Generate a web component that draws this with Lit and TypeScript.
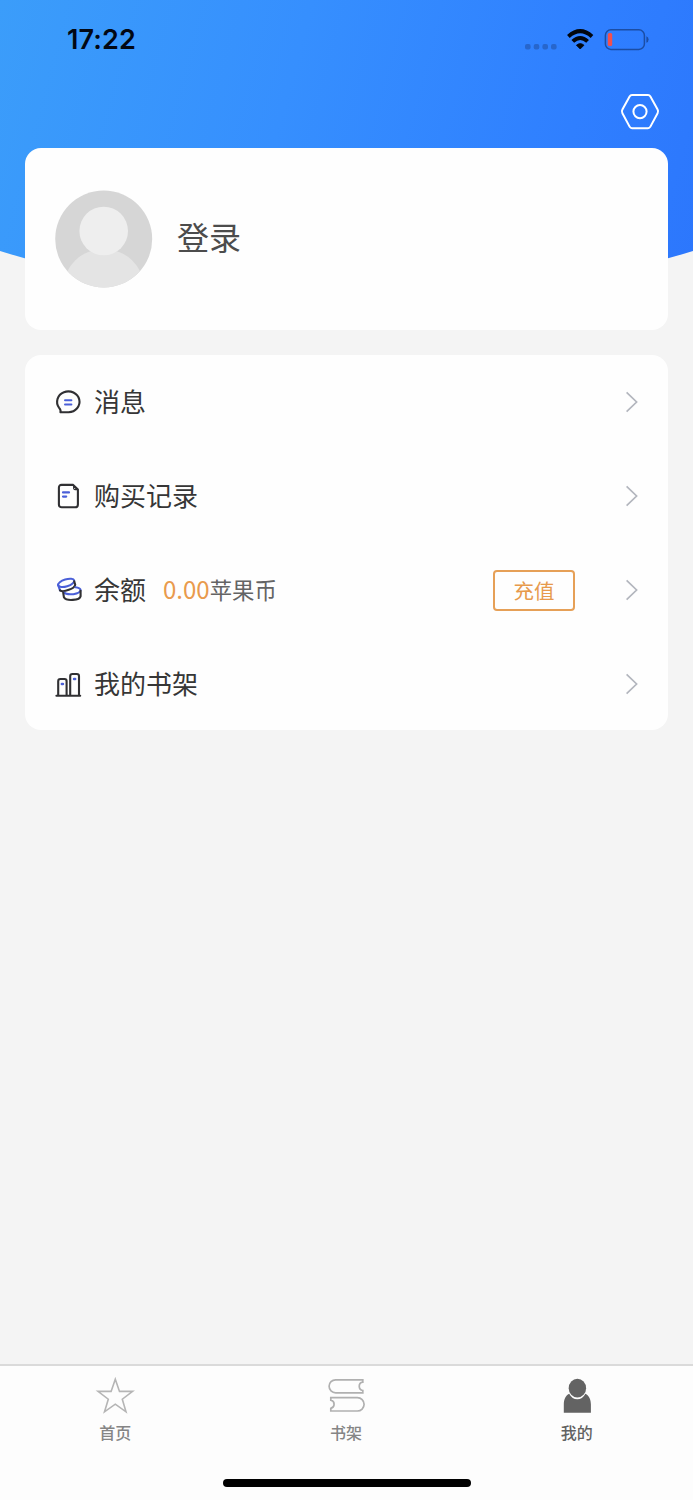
import { LitElement, html, css, svg } from "lit";
import { customElement, property } from "lit/decorators.js";

const icons: Record<string, unknown> = {
  message: svg`
    <path d="M6.4 24.2H14.6A11.2 10.4 0 1 0 5 19.6Q7.2 22.2 6.4 24.2Z" stroke="#303033" />
    <path d="M11 12.3H17.4M11 16.4H17.4" stroke="#4a5fd8" stroke-width="2" />`,
  record: svg`
    <path d="M7.6 2.9H19.2L23.9 7.4V22.4Q23.9 25.3 21 25.3H7.8Q4.9 25.3 4.9 22.4V5.8Q4.9 2.9 7.6 2.9Z" stroke="#303033" />
    <path d="M19.6 3.6V6.4Q19.8 7.6 21 7.6H23Z" stroke="#303033" stroke-width="1.1" />
    <path d="M9 10.4H15M9 14.6H12.2" stroke="#4a5fd8" stroke-width="2.2" />`,
  balance: svg`
    <path d="M4.2 9.2L6 14.4" stroke="#4a5fd8" />
    <ellipse cx="12.2" cy="6.9" rx="8.4" ry="3.5" transform="rotate(-17 12.2 6.9)" stroke="#4a5fd8" />
    <path d="M20.2 5.2L21.2 8.8Q20.8 11.6 14.8 13.8Q8.6 16.2 6 14.4" stroke="#303033" />
    <path d="M21.4 11.2Q26.2 11.6 26.6 14.2Q26.2 17.2 19.4 18.2Q12 18.8 9.8 16.6" stroke="#4a5fd8" />
    <path d="M9.2 16.6L9.9 21.2Q11.8 24.4 18.8 23.9Q26 23.4 26.6 20.2V14.8" stroke="#303033" />`,
  shelf: svg`
    <path d="M2.4 25.8H26.2M4.2 25.4V11.2Q4.2 9 6.4 9H10.6Q12.6 9 12.6 11.2V25.4M16.2 25.4V6.2Q16.2 4 18.4 4H22.8Q25 4 25 6.2V25.4" stroke="#303033" />
    <path d="M7.9 14H8.9M20.1 9H21.1" stroke="#4a5fd8" stroke-width="2.6" />`,
};

const tabIcons: Record<string, unknown> = {
  home: svg`<path d="M20.3 4.2L24.5 16.4H37.6L27.3 24.2L31 36.8L20.3 29.2L9.5 36.8L13.3 24.2L3 16.4H16.1Z" fill="none" stroke="#b5b5b5" stroke-width="1.6" />`,
  books: svg`<path d="M36.8 4.8H9.6A6.5 6.5 0 0 0 9.6 17.8H36.8V15.5A4.2 4.2 0 0 1 36.8 7.2ZM4.8 22.6H31.4A6.7 6.7 0 0 1 31.4 36H4.8V33.4A4.2 4.2 0 0 0 4.8 25.2Z" fill="none" stroke="#b0b0b0" stroke-width="1.7" />`,
  mine: svg`<g transform="translate(.4 0)"><path d="M11.8 18.7C8 20.7 6.4 24.4 6.4 29.5V37.8H33.5V29.5C33.5 24.4 31.8 20.7 28 18.7Q25 24.3 19.9 24.3T11.8 18.7Z" fill="#636363" />
    <ellipse cx="20" cy="13.2" rx="8.7" ry="9.4" fill="#636363" /></g>`,
};

@customElement("menu-row")
class MenuRow extends LitElement {
  @property() icon = "";
  @property() label = "";

  static styles = css`
    :host { display: flex; align-items: center; height: 94px; padding: 0 29px; }
    .icon { width: 28px; height: 28px; flex: none; fill: none; stroke-width: 2.1; stroke-linecap: round; stroke-linejoin: round; }
    .label { margin: -2px 0 0 12px; font-size: 26px; line-height: 38px; color: #363636; white-space: nowrap; }
    .extra { flex: 1; display: flex; align-items: center; }
    .arrow { width: 16px; height: 24px; flex: none; }
  `;

  render() {
    return html`
      <svg class="icon" viewBox="0 0 28 28">${icons[this.icon]}</svg>
      <span class="label">${this.label}</span>
      <div class="extra"><slot></slot></div>
      <svg class="arrow" viewBox="0 0 16 24">
        <path d="M3.6 2.3L13.6 12L3.6 21.7" fill="none" stroke="#b3b6be" stroke-width="1.7" />
      </svg>
    `;
  }
}

@customElement("app-root")
class AppRoot extends LitElement {
  static styles = css`
    :host {
      display: flex; flex-direction: column; width: 693px; height: 1500px; overflow: hidden;
      background: #f4f4f4; font-family: "Noto Sans CJK SC", sans-serif;
    }
    .hero {
      flex: none; height: 320px;
      background: linear-gradient(105deg, #3b9dfa 0%, #368ffe 40%, #2f7fff 78%, #2c76fc 100%);
      clip-path: path("M0 0H693V251Q346.5 358 0 251Z");
    }
    .status { display: flex; align-items: center; height: 80px; padding: 0 44px 0 67px; }
    .time { flex: 1; font: 600 27px/34px Inter, sans-serif; letter-spacing: 0.1px; color: #020814; }
    .indicators { width: 124px; height: 26px; }
    .tools { display: flex; justify-content: flex-end; padding: 10px 32px 0 0; }
    .gear { width: 42px; height: 42px; }
    .cards { flex: 1; display: flex; flex-direction: column; gap: 25px; margin-top: -172px; padding: 0 25px; }
    .card { background: #fefefe; border-radius: 16px; position: relative; }
    .profile { display: flex; align-items: center; height: 182px; padding: 0 30px; }
    .avatar { width: 98px; height: 98px; }
    .login { margin: -6px 0 0 24px; font-size: 32px; line-height: 46px; color: #4c4c4c; }
    .menu { height: 375px; }
    .amount { margin: -2px 0 0 17px; font-size: 22.4px; line-height: 34px; color: #646464; }
    .num { font-size: 24px; color: #e99a4c; }
    .recharge {
      margin: 0 48px 0 auto; width: 82px; height: 41px; box-sizing: border-box;
      border: 2px solid #e6a057; border-radius: 4px; background: none; padding: 0;
      font: 400 20.5px/37px "Noto Sans CJK SC", sans-serif; color: #e79a4c; text-align: center;
    }
    .tabs { flex: none; height: 136px; box-sizing: border-box; border-top: 2px solid #dadada; background: #fdfdfd; display: flex; flex-direction: column; align-items: center; }
    .row { display: grid; grid-template-columns: repeat(3, 1fr); width: 100%; height: 115px; box-sizing: border-box; padding-right: 1px; }
    .tab { display: flex; flex-direction: column; align-items: center; padding-top: 9px; font-size: 16px; line-height: 24px; font-weight: 500; color: #858585; }
    .tab.active { color: #626262; }
    .tabicon { width: 40px; height: 40px; margin-bottom: 5px; }
    .bar { width: 248px; height: 8px; border-radius: 4px; background: #000; margin-top: -2px; }
  `;

  private tabs = [
    { icon: "home", label: "首页" },
    { icon: "books", label: "书架" },
    { icon: "mine", label: "我的", active: true },
  ];

  render() {
    return html`
      <header class="hero">
        <div class="status">
          <span class="time">17:22</span>
          <svg class="indicators" viewBox="0 0 124 26">
            <g fill="#2766cc">
              <rect x="0" y="17" width="5.6" height="5.6" rx="2" />
              <rect x="8.7" y="17" width="5.6" height="5.6" rx="2" />
              <rect x="17.4" y="17" width="5.6" height="5.6" rx="2" />
              <rect x="26" y="17" width="5.6" height="5.6" rx="2" />
            </g>
            <g fill="none" stroke="#02060e" stroke-width="4">
              <path d="M43.4 9.4Q55.2 -1 67 9.4" />
              <path d="M47.8 14.4Q55.2 7.6 62.6 14.4" />
            </g>
            <path d="M51.4 18.2Q55.2 15 59 18.2L55.2 22Z" fill="#02060e" stroke="#02060e" stroke-width=".8" />
            <rect x="80.4" y="2.8" width="39" height="19.6" rx="5.5" fill="none" stroke="#1b4da4" stroke-width="1.5" />
            <rect x="82.8" y="6" width="4.4" height="13" rx="1.5" fill="#f3504d" />
            <path d="M121.4 9.2Q123.6 10 123.6 12.5T121.4 15.8Z" fill="#1b4da4" />
          </svg>
        </div>
        <div class="tools">
          <svg class="gear" viewBox="0 0 42 42" fill="none" stroke="#fff" stroke-width="2">
            <path d="M13 5H29Q30.6 5 31.4 6.4L38.6 19.6Q39.6 21.4 38.6 23.2L31.4 36.6Q30.6 38.2 29 38.2H13Q11.4 38.2 10.6 36.6L3.4 23.2Q2.4 21.4 3.4 19.6L10.6 6.4Q11.4 5 13 5Z" />
            <circle cx="21" cy="21.6" r="6.6" />
          </svg>
        </div>
      </header>
      <main class="cards">
        <section class="card profile">
          <svg class="avatar" viewBox="0 0 98 98">
            <defs><clipPath id="round"><circle cx="48.7" cy="49" r="48.5" /></clipPath></defs>
            <g clip-path="url(#round)">
              <rect width="98" height="98" fill="#d6d6d6" />
              <ellipse cx="48.7" cy="97" rx="40" ry="38" fill="#e4e4e4" />
              <circle cx="48.7" cy="41" r="24.3" fill="#eee" />
            </g>
          </svg>
          <span class="login">登录</span>
        </section>
        <section class="card menu">
          <menu-row icon="message" label="消息"></menu-row>
          <menu-row icon="record" label="购买记录"></menu-row>
          <menu-row icon="balance" label="余额">
            <span class="amount"><span class="num">0.00</span>苹果币</span>
            <button class="recharge">充值</button>
          </menu-row>
          <menu-row icon="shelf" label="我的书架"></menu-row>
        </section>
      </main>
      <footer class="tabs">
        <nav class="row">
          ${this.tabs.map((t) => html`
            <div class="tab ${t.active ? "active" : ""}">
              <svg class="tabicon" viewBox="0 0 40 40">${tabIcons[t.icon]}</svg>
              <span>${t.label}</span>
            </div>`)}
        </nav>
        <div class="bar"></div>
      </footer>
    `;
  }
}
